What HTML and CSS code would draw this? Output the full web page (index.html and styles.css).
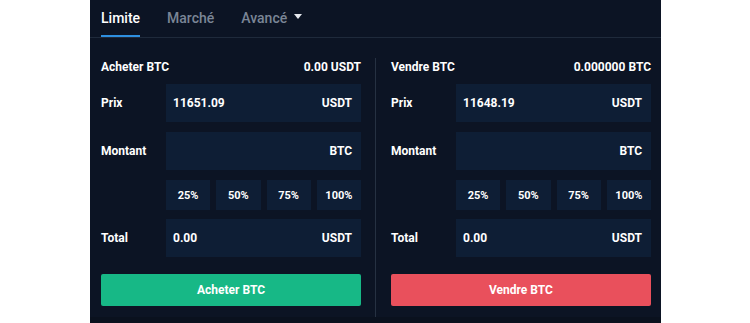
FILE: index.html
```html
<!DOCTYPE html>
<html lang="fr">
<head>
    <meta charset="UTF-8">
    <meta name="viewport" content="width=device-width, initial-scale=1.0">
    <title>Trading BTC/USDT</title>
    <link rel="stylesheet" href="styles.css">
</head>
<body>

    <div class="panel">
        <nav class="tabs">
            <a href="#" class="tab active">Limite</a>
            <a href="#" class="tab">Marché</a>
            <a href="#" class="tab">Avancé <span class="caret"></span></a>
        </nav>

        <div class="forms">
            <div class="side">
                <div class="side-head">
                    <span>Acheter BTC</span>
                    <span>0.00 USDT</span>
                </div>
                <div class="row">
                    <label>Prix</label>
                    <div class="field"><span>11651.09</span><span>USDT</span></div>
                </div>
                <div class="row">
                    <label>Montant</label>
                    <div class="field"><span></span><span>BTC</span></div>
                </div>
                <div class="row row-pct">
                    <label></label>
                    <div class="pcts">
                        <button class="pct">25%</button>
                        <button class="pct">50%</button>
                        <button class="pct">75%</button>
                        <button class="pct">100%</button>
                    </div>
                </div>
                <div class="row">
                    <label>Total</label>
                    <div class="field"><span>0.00</span><span>USDT</span></div>
                </div>
                <button class="submit buy">Acheter BTC</button>
            </div>

            <div class="divider"></div>

            <div class="side">
                <div class="side-head">
                    <span>Vendre BTC</span>
                    <span>0.000000 BTC</span>
                </div>
                <div class="row">
                    <label>Prix</label>
                    <div class="field"><span>11648.19</span><span>USDT</span></div>
                </div>
                <div class="row">
                    <label>Montant</label>
                    <div class="field"><span></span><span>BTC</span></div>
                </div>
                <div class="row row-pct">
                    <label></label>
                    <div class="pcts">
                        <button class="pct">25%</button>
                        <button class="pct">50%</button>
                        <button class="pct">75%</button>
                        <button class="pct">100%</button>
                    </div>
                </div>
                <div class="row">
                    <label>Total</label>
                    <div class="field"><span>0.00</span><span>USDT</span></div>
                </div>
                <button class="submit sell">Vendre BTC</button>
            </div>
        </div>
    </div>

</body>
</html>
```

FILE: styles.css
```css
body {
    margin: 0;
    padding: 0;
    background-color: #ffffff;
    font-family: 'Roboto', 'Liberation Sans', sans-serif;
    color: #ffffff;
}

.panel {
    margin-left: 90px;
    width: 571px;
    height: 323px;
    background-color: #0c1424;
    overflow: hidden;
}

.tabs {
    display: flex;
    height: 37px;
    border-bottom: 1px solid #1f2a3b;
    padding-left: 11px;
}

.tab {
    display: flex;
    align-items: center;
    height: 35px;
    margin-right: 27px;
    font-size: 14px;
    font-weight: 500;
    color: #7a8596;
    text-decoration: none;
    border-bottom: 2px solid transparent;
}

.tab.active {
    color: #ffffff;
    border-bottom-color: #2e8fe0;
}

.caret {
    display: inline-block;
    margin-left: 7px;
    width: 0;
    height: 0;
    border-left: 4px solid transparent;
    border-right: 4px solid transparent;
    border-top: 5px solid #e6e9ee;
    position: relative;
    top: -1px;
}

.forms {
    display: flex;
    padding-left: 11px;
    height: 279px;
    border-bottom: 6px solid #0a111e;
}

.side {
    width: 260px;
    padding-top: 20px;
}

.divider {
    width: 1px;
    background-color: #263142;
    margin: 20px 15px 0 14px;
}

.side-head {
    display: flex;
    justify-content: space-between;
    align-items: center;
    height: 18px;
    font-size: 12px;
    font-weight: 700;
    margin-bottom: 8px;
}

.row {
    display: flex;
    align-items: center;
    height: 38px;
    margin-bottom: 10px;
}

.row label {
    width: 65px;
    font-size: 12px;
    font-weight: 700;
}

.field {
    flex: 1;
    height: 100%;
    background-color: #0e1e35;
    display: flex;
    justify-content: space-between;
    align-items: center;
    padding: 0 9px 0 7px;
    font-size: 12px;
    font-weight: 700;
}

.row-pct {
    height: 30px;
    margin-bottom: 9px;
}

.pcts {
    flex: 1;
    display: flex;
    gap: 6px;
    height: 100%;
}

.pct {
    flex: 1;
    border: none;
    background-color: #0e1e35;
    color: #ffffff;
    font-family: inherit;
    font-size: 11px;
    font-weight: 700;
    padding: 0;
}

.submit {
    display: block;
    width: 100%;
    height: 32px;
    margin-top: 17px;
    border: none;
    border-radius: 2px;
    color: #ffffff;
    font-family: inherit;
    font-size: 12px;
    font-weight: 700;
}

.submit.buy {
    background-color: #17b886;
}

.submit.sell {
    background-color: #e9505c;
}
```
